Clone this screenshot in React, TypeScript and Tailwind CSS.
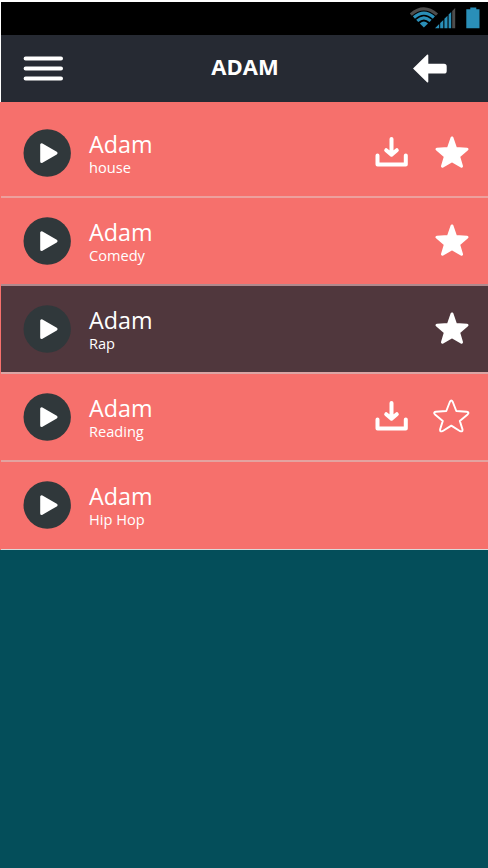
interface Track {
  name: string;
  genre: string;
  download?: boolean;
  star?: "full" | "empty";
  active?: boolean;
  line: string;
}

const tracks: Track[] = [
  { name: "Adam", genre: "house", download: true, star: "full", line: "border-b-2 border-[#eda09d]" },
  { name: "Adam", genre: "Comedy", star: "full", line: "border-b-2 border-[#b0898d]" },
  { name: "Adam", genre: "Rap", star: "full", active: true, line: "border-b-2 border-[#dba5a4]" },
  { name: "Adam", genre: "Reading", download: true, star: "empty", line: "border-b-2 border-[#e3a3a0]" },
  { name: "Adam", genre: "Hip Hop", line: "border-b border-[#d9d9d9]" },
];

function StatusIcons() {
  return (
    <svg width="72" height="24" viewBox="0 0 72 24" fill="none">
      {/* wifi */}
      <path d="M.8 9.6Q13.9-1.8 27 9.6" stroke="#4d4d4d" strokeWidth="3.2" />
      <path d="M3.9 12.5Q13.9 3.7 23.9 12.5" stroke="#2a8fb8" strokeWidth="3.2" />
      <path d="M7.2 15.9Q13.9 9.8 20.6 15.9" stroke="#2a8fb8" strokeWidth="3" />
      <path d="M9.8 18.4Q13.9 14.6 18 18.4L13.9 22.6Z" fill="#2a8fb8" />
      {/* signal */}
      <path
        d="M25 23.3L29.2 19V23.3ZM30.2 18L33.3 14.9V23.3H30.2ZM34.4 13.8L37.5 10.7V23.3H34.4ZM38.6 9.6L41.2 7V23.3H38.6Z"
        fill="#2a8fb8"
      />
      <path d="M42.2 6L45.2 3V23.3H42.2Z" fill="#4d4d4d" />
      {/* battery */}
      <path d="M60.3 2.5H66.3V4.2H69.5V23.3H56.3V4.2H60.3Z" fill="#2a8fb8" />
    </svg>
  );
}

function PlayButton() {
  return (
    <svg width="48" height="48" viewBox="0 0 48 48">
      <circle cx="24.2" cy="24" r="23.7" fill="#30383b" />
      <path
        d="M18.7 15.8V32.4L33 24.1Z"
        fill="#fff"
        stroke="#fff"
        strokeWidth="3"
        strokeLinejoin="round"
      />
    </svg>
  );
}

function DownloadIcon() {
  return (
    <svg
      width="34"
      height="32"
      viewBox="0 0 34 32"
      fill="none"
      stroke="#fff"
      strokeWidth="4"
      strokeLinecap="round"
    >
      <path d="M17.5 4V19M12.2 15.2L17.5 19.6L22.8 15.2" strokeLinejoin="round" />
      <path d="M3.5 20.5V29.6H31.8V20.5" strokeLinejoin="round" />
    </svg>
  );
}

function StarIcon({ filled }: { filled: boolean }) {
  return (
    <svg
      width="38"
      height="36"
      viewBox="0 0 38 36"
      fill={filled ? "#fff" : "none"}
      stroke="#fff"
      strokeLinejoin="round"
    >
      {filled ? (
        <path
          strokeWidth="3"
          d="M19 3L22.6 13.4L34 14.2L25.6 21.4L28.5 31.2L19 25.8L9.5 31.2L12.4 21.4L4 14.2L15.4 13.4Z"
        />
      ) : (
        <path
          strokeWidth="1.9"
          d="M16.8 3Q18.3-.1 19.8 3L23.3 12L33.8 12.7Q36.6 13.3 34.6 15.4L26.8 21.9L29.5 30.4Q29.8 33 27.2 32.2L18.3 26.6L9.4 32.2Q6.8 33 7.1 30.4L9.8 21.9L2 15.4Q0 13.3 2.8 12.7L13.3 12Z"
        />
      )}
    </svg>
  );
}

function TrackRow({ track }: { track: Track }) {
  return (
    <div
      className={`flex h-[88px] items-start pt-[19px] pl-[22px] pr-[17px] ${track.line} ${
        track.active ? "bg-[#50373d]" : "bg-[#f6706c]"
      }`}
    >
      <PlayButton />
      <div className="ml-[18px] flex-1 text-white">
        <div className="text-[23.3px] leading-[30px]">{track.name}</div>
        <div className="text-[14.6px] leading-[17px]">{track.genre}</div>
      </div>
      <div className="flex items-start gap-[25px] pt-[6px]">
        {track.download && <DownloadIcon />}
        {track.star && <StarIcon filled={track.star === "full"} />}
      </div>
    </div>
  );
}

export default function App() {
  return (
    <div className="flex h-[868px] w-[488px] flex-col overflow-hidden bg-[#044e5a] font-['Open_Sans',sans-serif]">
      <div className="bg-white pt-[2px] pl-px">
        <div className="flex h-[33px] justify-end bg-black pt-[3px] pr-[6px]">
          <StatusIcons />
        </div>
        <header className="flex h-[67px] items-center justify-between bg-[#262a33] pr-[41px] pl-[22px]">
          <svg width="40" height="26" viewBox="0 0 40 26" stroke="#fff" strokeWidth="4" strokeLinecap="round">
            <path d="M2.6 2.6H38M2.6 12.5H38M2.6 22.4H38" />
          </svg>
          <h1 className="mb-[5px] ml-[14px] text-[22px] leading-7 font-bold text-white">ADAM</h1>
          <svg width="34" height="30" viewBox="0 0 34 30" fill="#fff">
            <path d="M0 14.5L14 .7Q15.3 0 15.3 1.5V9.8H31Q33.7 9.8 33.7 12.5V16.9Q33.7 19.5 31 19.5H15.3V27.5Q15.3 29 14 28.3Z" />
          </svg>
        </header>
      </div>

      <main className="bg-[#f6706c] pt-2 pl-px">
        {tracks.map((track) => (
          <TrackRow key={track.genre} track={track} />
        ))}
      </main>
    </div>
  );
}
